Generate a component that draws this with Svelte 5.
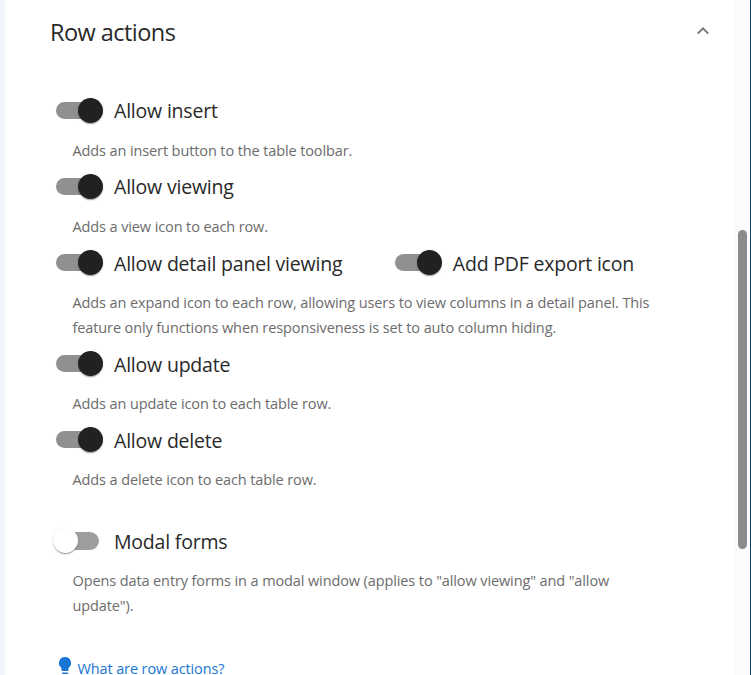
<script>
  let actions = $state([
    {
      switches: [{label: 'Allow insert', on: true}],
      help: ['Adds an insert button to the table toolbar.']
    },
    {
      switches: [{label: 'Allow viewing', on: true}],
      help: ['Adds a view icon to each row.']
    },
    {
      switches: [
        {label: 'Allow detail panel viewing', on: true},
        {label: 'Add PDF export icon', on: true}
      ],
      help: [
        'Adds an expand icon to each row, allowing users to view columns in a detail panel. This',
        'feature only functions when responsiveness is set to auto column hiding.'
      ]
    },
    {
      switches: [{label: 'Allow update', on: true}],
      help: ['Adds an update icon to each table row.']
    },
    {
      switches: [{label: 'Allow delete', on: true}],
      help: ['Adds a delete icon to each table row.']
    },
    {
      spaced: true,
      switches: [{label: 'Modal forms', on: false}],
      help: [
        'Opens data entry forms in a modal window (applies to "allow viewing" and "allow',
        'update").'
      ]
    }
  ]);
</script>

<div class="page">
  <main class="panel">
    <header>
      <h2>Row actions</h2>
      <svg class="chevron" viewBox="0 0 14 10" aria-hidden="true">
        <path d="M1.7 7.6 7 2.3l5.300 5.300"/>
      </svg>
    </header>

    {#each actions as action}
      <section class:spaced={action.spaced}>
        <div class="switches">
          {#each action.switches as item}
            <button class="switch" role="switch" aria-checked={item.on} onclick={() => item.on = !item.on}>
              <span class="toggle" class:on={item.on}>
                <span class="track"></span>
                <span class="thumb"></span>
              </span>
              <span class="label">{item.label}</span>
            </button>
          {/each}
        </div>
        <div class="help">
          {#each action.help as line}
            <div><span>{line}</span></div>
          {/each}
        </div>
      </section>
    {/each}

    <a class="more" href="#row-actions">
      <svg viewBox="0 0 12 18" aria-hidden="true">
        <path d="M6 0a6 6 0 0 0-3.500 10.900V13c0 .6.400 1 1 1h5c.6 0 1-.4 1-1v-2.100A6 6 0 0 0 6 0zM3 15.400h6v.6c0 .6-.4 1-1 1H4c-.6 0-1-.4-1-1z"/>
      </svg>
      <span>What are row actions?</span>
    </a>
  </main>
  <div class="scrollbar"><div class="handle"></div></div>
</div>

<style>
  :global(body) {
    overflow: hidden;
  }
  .page {
    display: flex;
    box-sizing: border-box;
    height: 675px;
    border-left: 5px solid #f2f6fa;
    border-right: 1px solid #07456f;
    background: #fff;
    font-family: "Open Sans", "Noto Sans", sans-serif;
    overflow: hidden;
  }
  .panel {
    flex: 1;
    white-space: nowrap;
  }
  header {
    display: flex;
    align-items: center;
    justify-content: space-between;
    height: 64px;
    margin-bottom: 28px;
    padding: 0 25px 0 45px;
  }
  h2 {
    margin: 0;
    color: #292929;
    font-size: 23.5px;
    font-weight: 400;
    letter-spacing: -0.55px;
  }
  .chevron {
    width: 14px;
    height: 10px;
    margin-bottom: 2px;
    fill: none;
    stroke: #757575;
    stroke-width: 2;
  }
  section {
    padding-bottom: 5px;
  }
  .spaced {
    padding-top: 25px;
  }
  .switches {
    display: flex;
    gap: 49.5px;
    height: 38px;
    padding-left: 48px;
  }
  .switch {
    display: flex;
    align-items: center;
    gap: 11px;
    padding: 0;
    border: 0;
    background: none;
    color: #292929;
    font: inherit;
    font-size: 19.5px;
  }
  .label {
    padding-top: 1px;
    letter-spacing: -0.2px;
  }
  section:nth-of-type(-n+2) .label {
    padding: 0 0 1px;
  }
  .toggle {
    position: relative;
    width: 50px;
    height: 38px;
  }
  .track {
    position: absolute;
    top: 10px;
    left: 3px;
    width: 43px;
    height: 18px;
    border-radius: 9px;
    background: #9e9e9e;
  }
  .thumb {
    position: absolute;
    top: 6px;
    left: 0;
    width: 25px;
    height: 25px;
    border-radius: 50%;
    background: #fff;
    box-shadow: 0 2px 1px -1px rgba(0,0,0,.2), 0 1px 1px rgba(0,0,0,.14), 0 1px 3px rgba(0,0,0,.12);
  }
  .on .track {
    height: 17px;
    background: #909090;
  }
  .on .thumb {
    left: 25px;
    background: #212121;
  }
  .help {
    padding: 8px 0 0 67.5px;
    color: #6c6c6c;
    font-size: 14.5px;
    line-height: 25px;
    letter-spacing: -0.11px;
  }
  .more {
    display: flex;
    align-items: flex-start;
    gap: 6.5px;
    margin: 34px 0 0 54px;
    color: #1976d2;
    font-size: 14.5px;
    line-height: 24px;
    letter-spacing: -0.12px;
    text-decoration: none;
  }
  .more svg {
    width: 12px;
    height: 18px;
    fill: #1976d2;
  }
  .scrollbar {
    box-sizing: border-box;
    width: 15px;
    padding: 230px 3px 0;
    background: #fbfbfb;
  }
  .handle {
    height: 319px;
    border-radius: 5px;
    background: #8b8b8b;
  }
</style>
